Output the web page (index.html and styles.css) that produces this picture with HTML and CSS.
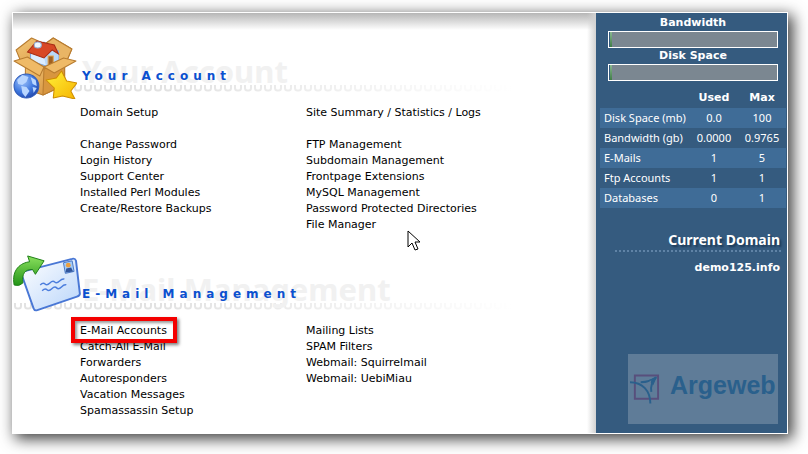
FILE: index.html
```html
<!DOCTYPE html>
<html lang="en">
<head>
<meta charset="utf-8">
<title>Control Panel</title>
<link rel="stylesheet" href="styles.css">
</head>
<body>
<div class="panel">
  <main class="main">
    <section class="section">
      <header class="head">
        <svg class="rule" aria-hidden="true">
          <defs>
            <pattern id="loops" width="10" height="7" patternUnits="userSpaceOnUse"><path d="M2 0v3q0 2.500 2.500 2.500h1q2.500 0 2.500-2.500V0" fill="none" stroke="#e2e2e2" stroke-width="2"/></pattern>
            <linearGradient id="fade"><stop offset=".3" stop-color="#fff" stop-opacity="0"/><stop offset="1" stop-color="#fff"/></linearGradient>
          </defs>
          <rect width="100%" height="7" fill="url(#loops)"/><rect width="100%" height="7" fill="url(#fade)"/>
        </svg>
        <svg class="icon" viewBox="2 2 62 62" preserveAspectRatio="none" aria-hidden="true">
          <defs>
            <linearGradient id="card" x2="1" y2="1"><stop stop-color="#f4c777"/><stop offset="1" stop-color="#cf8935"/></linearGradient>
            <linearGradient id="star" x2="1" y2="1"><stop stop-color="#fff13a"/><stop offset="1" stop-color="#f6b400"/></linearGradient>
            <radialGradient id="globe" cx=".35" cy=".3" r=".75"><stop stop-color="#9ec3fa"/><stop offset=".6" stop-color="#3f78df"/><stop offset="1" stop-color="#2349ae"/></radialGradient>
          </defs>
          <g stroke="#b87c30" stroke-linejoin="round">
            <path d="M5 15L20 3l13 6 8-6 18 11-7 17-20 6-21-7z" fill="url(#card)"/>
            <path d="M33 9v15l19 7 7-17L41 3z" fill="#e9b565"/>
            <path d="M14 28l18 6 20-6v22L31 60l-17-6z" fill="url(#card)"/>
            <path d="M32 34l20-6v22L31 60z" fill="#d8963f"/>
          </g>
          <path d="M19 15l13-8 14 9v10l-12 5-15-5z" fill="#dcedff" stroke="#79a5df"/>
          <path d="M32 22l7-8 7 5v8l-12 4z" fill="#b8d8fa"/>
          <path d="M16 17L25 6l17 4 4 9-6-4-8 8z" fill="#d84825" stroke="#a72c14"/>
          <ellipse cx="26" cy="10" rx="3.500" ry="3" fill="#eff7ff" stroke="#91afd4"/>
          <path d="M36 21h5v8l-5 2z" fill="#a06022" stroke="#dfa556"/>
          <path d="M3 26l13-4 16 10-4 9zM32 32l19-9 12 3-21 12z" fill="#efba67" stroke="#b87c30" stroke-linejoin="round"/>
          <path d="M37 45l8-3 2 5-8 3z" fill="#ed6a2d"/>
          <circle cx="15" cy="51" r="12" fill="url(#globe)" stroke="#315db9"/>
          <path d="M6 45l5-5 6 2-2 5-4 3-4-1zM10 51l5 1 3 4-4 6-3-4zM19 42l5 3 1 6-4-2zM21 52l4 1-3 5z" fill="#b9d6ff"/>
          <path d="M49 36l5 10 10 2-6 8 4 8-12-3-9 2 1-10-8-8 10-2z" fill="url(#star)" stroke="#ce8d00" stroke-linejoin="round"/>
        </svg>
        <span class="ghost" aria-hidden="true">Your Account</span>
        <h2 class="title">Your Account</h2>
      </header>
      <div class="links top">
        <ul><li><a href="#">Domain Setup</a></li></ul>
        <ul><li><a href="#">Site Summary / Statistics / Logs</a></li></ul>
      </div>
      <div class="links">
        <ul>
          <li><a href="#">Change Password</a></li>
          <li><a href="#">Login History</a></li>
          <li><a href="#">Support Center</a></li>
          <li><a href="#">Installed Perl Modules</a></li>
          <li><a href="#">Create/Restore Backups</a></li>
        </ul>
        <ul>
          <li><a href="#">FTP Management</a></li>
          <li><a href="#">Subdomain Management</a></li>
          <li><a href="#">Frontpage Extensions</a></li>
          <li><a href="#">MySQL Management</a></li>
          <li><a href="#">Password Protected Directories</a></li>
          <li class="pointed"><a href="#">File Manager</a>
            <svg class="cursor" viewBox="0 0 13 21" aria-hidden="true"><path d="M1 1v16l4-4 3 7 3-1-3-7h5z" fill="#fff" stroke="#000"/></svg>
          </li>
        </ul>
      </div>
    </section>
    <section class="section">
      <header class="head">
        <svg class="rule" aria-hidden="true"><rect width="100%" height="7" fill="url(#loops)"/><rect width="100%" height="7" fill="url(#fade)"/></svg>
        <svg class="icon mail" viewBox="0 0 70 60" aria-hidden="true">
          <defs>
            <linearGradient id="paper" x2="1" y2="1"><stop stop-color="#fff"/><stop offset="1" stop-color="#b9d5fa"/></linearGradient>
            <linearGradient id="green" x2="0" y2="1"><stop stop-color="#8be05e"/><stop offset="1" stop-color="#219416"/></linearGradient>
          </defs>
          <path d="M11 17L61 4q3-1 4 2l4 34q0 2-3 3L25 57q-3 1-4-2L9 21q-1-3 2-4z" fill="url(#paper)" stroke="#4977d5" stroke-width="2"/>
          <path d="M52 8l9-2 2 11-9 2z" fill="#a4cdf9" stroke="#4977c5"/>
          <circle cx="57" cy="10.500" r="2.500" fill="#eca040"/><path d="M54 18l1-4 5-1 2 4z" fill="#31559b"/>
          <path d="M28 31q3-3 5-1t5-1 5-1 5-1 5-2M30 37q3-3 5-1t5-1 5-1 5-1 5-2" fill="none" stroke="#4b7ddd" stroke-width="1.500"/>
          <path d="M1 31C-2 15 8 8 17 7l-2-6 17 5-9 14-3-5C12 15 9 19 10 29q-4 4-9 2z" fill="url(#green)" stroke="#1c7d15" stroke-linejoin="round"/>
        </svg>
        <span class="ghost" aria-hidden="true">E-Mail Management</span>
        <h2 class="title">E-Mail Management</h2>
      </header>
      <div class="links">
        <ul>
          <li class="marked"><a href="#">E-Mail Accounts</a></li>
          <li><a href="#">Catch-All E-Mail</a></li>
          <li><a href="#">Forwarders</a></li>
          <li><a href="#">Autoresponders</a></li>
          <li><a href="#">Vacation Messages</a></li>
          <li><a href="#">Spamassassin Setup</a></li>
        </ul>
        <ul>
          <li><a href="#">Mailing Lists</a></li>
          <li><a href="#">SPAM Filters</a></li>
          <li><a href="#">Webmail: Squirrelmail</a></li>
          <li><a href="#">Webmail: UebiMiau</a></li>
        </ul>
      </div>
    </section>
  </main>
  <aside class="side">
    <div class="usage">
      <label for="bandwidth">Bandwidth</label>
      <progress id="bandwidth" value="1" max="100"></progress>
      <label for="disk">Disk Space</label>
      <progress id="disk" value="1" max="100"></progress>
    </div>
    <table class="stats">
      <thead><tr><td></td><th scope="col">Used</th><th scope="col">Max</th></tr></thead>
      <tbody>
        <tr><th scope="row">Disk Space (mb)</th><td>0.0</td><td>100</td></tr>
        <tr><th scope="row">Bandwidth (gb)</th><td>0.0000</td><td>0.9765</td></tr>
        <tr><th scope="row">E-Mails</th><td>1</td><td>5</td></tr>
        <tr><th scope="row">Ftp Accounts</th><td>1</td><td>1</td></tr>
        <tr><th scope="row">Databases</th><td>0</td><td>1</td></tr>
      </tbody>
    </table>
    <div class="domain">
      <h3>Current Domain</h3>
      <p>demo125.info</p>
    </div>
    <div class="logo">
      <svg viewBox="0 0 32 32" aria-hidden="true">
        <path d="M5 2h24v24H5z" fill="none" stroke="#584f7c" stroke-width="2"/>
        <path d="M0 9c13 0 21 9 21 22M11 9c7 0 12-2 16-5-4 4-6 9-5 15" fill="none" stroke="#2a608c" stroke-width="2"/>
        <path d="M28 3l-9 4 5 5z" fill="#2a608c"/>
        <path d="M16 11l6-4-2 7z" fill="#5f7c98"/>
      </svg>
      <span>Argeweb</span>
    </div>
  </aside>
</div>
</body>
</html>
```
FILE: styles.css
```css
* { box-sizing: border-box; }
body {
  margin: 0;
  padding: 12px 20px 20px 12px;
  background: #fff;
  color: #000;
  font: 11px/16px Verdana, "DejaVu Sans", sans-serif;
}
a { color: inherit; text-decoration: none; }
ul { list-style: none; margin: 0; padding: 0; }
.panel {
  display: flex;
  border: 1px solid #fff;
  background: #fff;
  box-shadow: 4px 4px 14px 1px rgba(0, 0, 0, .75);
}
.main {
  flex: 1;
  padding: 24px 0 14px;
  background:
    linear-gradient(to left, #d2d2d2, transparent 9px),
    linear-gradient(#b6b6b6, #fff 17px);
}
.section + .section { margin-top: 22px; }
.head {
  display: grid;
  grid-template-columns: 67px 1fr;
  height: 62px;
  margin-bottom: 6px;
}
.head > * { grid-row: 1; }
.rule {
  grid-column: 1 / 3;
  align-self: end;
  width: 100%;
  max-width: 500px;
  height: 7px;
  margin-bottom: 7px;
}
.icon {
  grid-column: 1;
  width: 64px;
  height: 62px;
  z-index: 1;
}
.icon.mail { width: 68px; height: 58px; }
.ghost, .title { grid-column: 2; white-space: nowrap; margin: 0; }
.ghost {
  padding: 14px 0 0 2px;
  color: #f1f1f1;
  font: bold 31px/40px Tahoma, "Noto Sans", sans-serif;
}
.title {
  padding: 31px 0 0 2px;
  color: #0b50cf;
  font-size: 12px;
  line-height: 16px;
  letter-spacing: 5px;
}
.links {
  display: grid;
  grid-template-columns: 226px 1fr;
  padding-left: 67px;
}
.links.top { margin-bottom: 16px; }
.marked, .pointed { position: relative; width: max-content; }
.marked::after {
  content: "";
  position: absolute;
  inset: -6px -10px -4px -9px;
  border: 4px solid #f40000;
  box-shadow: 2px 2px 3px rgba(0, 0, 0, .5), inset 2px 2px 3px rgba(0, 0, 0, .4);
  pointer-events: none;
}
.cursor { position: absolute; left: 101px; top: 13px; width: 13px; height: 21px; }
.side {
  flex: 0 0 191px;
  padding: 2px 1px 9px 4px;
  background: #355b7f;
  color: #fff;
}
.usage { padding: 0 8px; text-align: center; font-weight: bold; }
.usage label, .usage progress { display: block; }
progress {
  appearance: none;
  width: 100%;
  height: 17px;
  border: 1px solid #fff;
  background: #7b8791;
}
progress::-webkit-progress-bar { background: #7b8791; }
progress::-webkit-progress-value {
  background: linear-gradient(#8ab992, #3f7d46);
  border-left: 1px solid #355b7f;
  box-sizing: content-box;
}
.stats {
  width: 100%;
  margin-top: 6px;
  border-collapse: collapse;
  table-layout: fixed;
  font-size: 11px;
  line-height: 20px;
}
.stats th, .stats td { padding: 0; text-align: center; width: 48px; }
.stats thead td { width: 90px; }
.stats thead tr { height: 21px; }
.stats tbody { font-family: Tahoma, "Noto Sans", sans-serif; }
.stats tbody th { padding-left: 4px; font-weight: normal; text-align: left; white-space: nowrap; }
.stats tbody tr:nth-child(odd) { background: #3f6c97; }
.domain { margin: 22px 5px 0 15px; text-align: right; font-weight: bold; }
.domain h3 {
  margin: 0;
  padding-right: 1px;
  border-bottom: 2px dotted #5f83a6;
  font: bold 14px/20px Tahoma, "Noto Sans", sans-serif;
  text-shadow: 2px 2px 2px #1c3956;
}
.domain p { margin: 8px 1px 0 0; }
.logo {
  display: flex;
  align-items: center;
  gap: 9px;
  height: 70px;
  margin: 78px 8px 0 28px;
  padding-left: 2px;
  background: #5f7c98;
  color: #2a608c;
  font: bold 25px/26px Arial, "Liberation Sans", sans-serif;
}
.logo svg { width: 31px; height: 32px; }
.logo span { padding-bottom: 8px; }
```
